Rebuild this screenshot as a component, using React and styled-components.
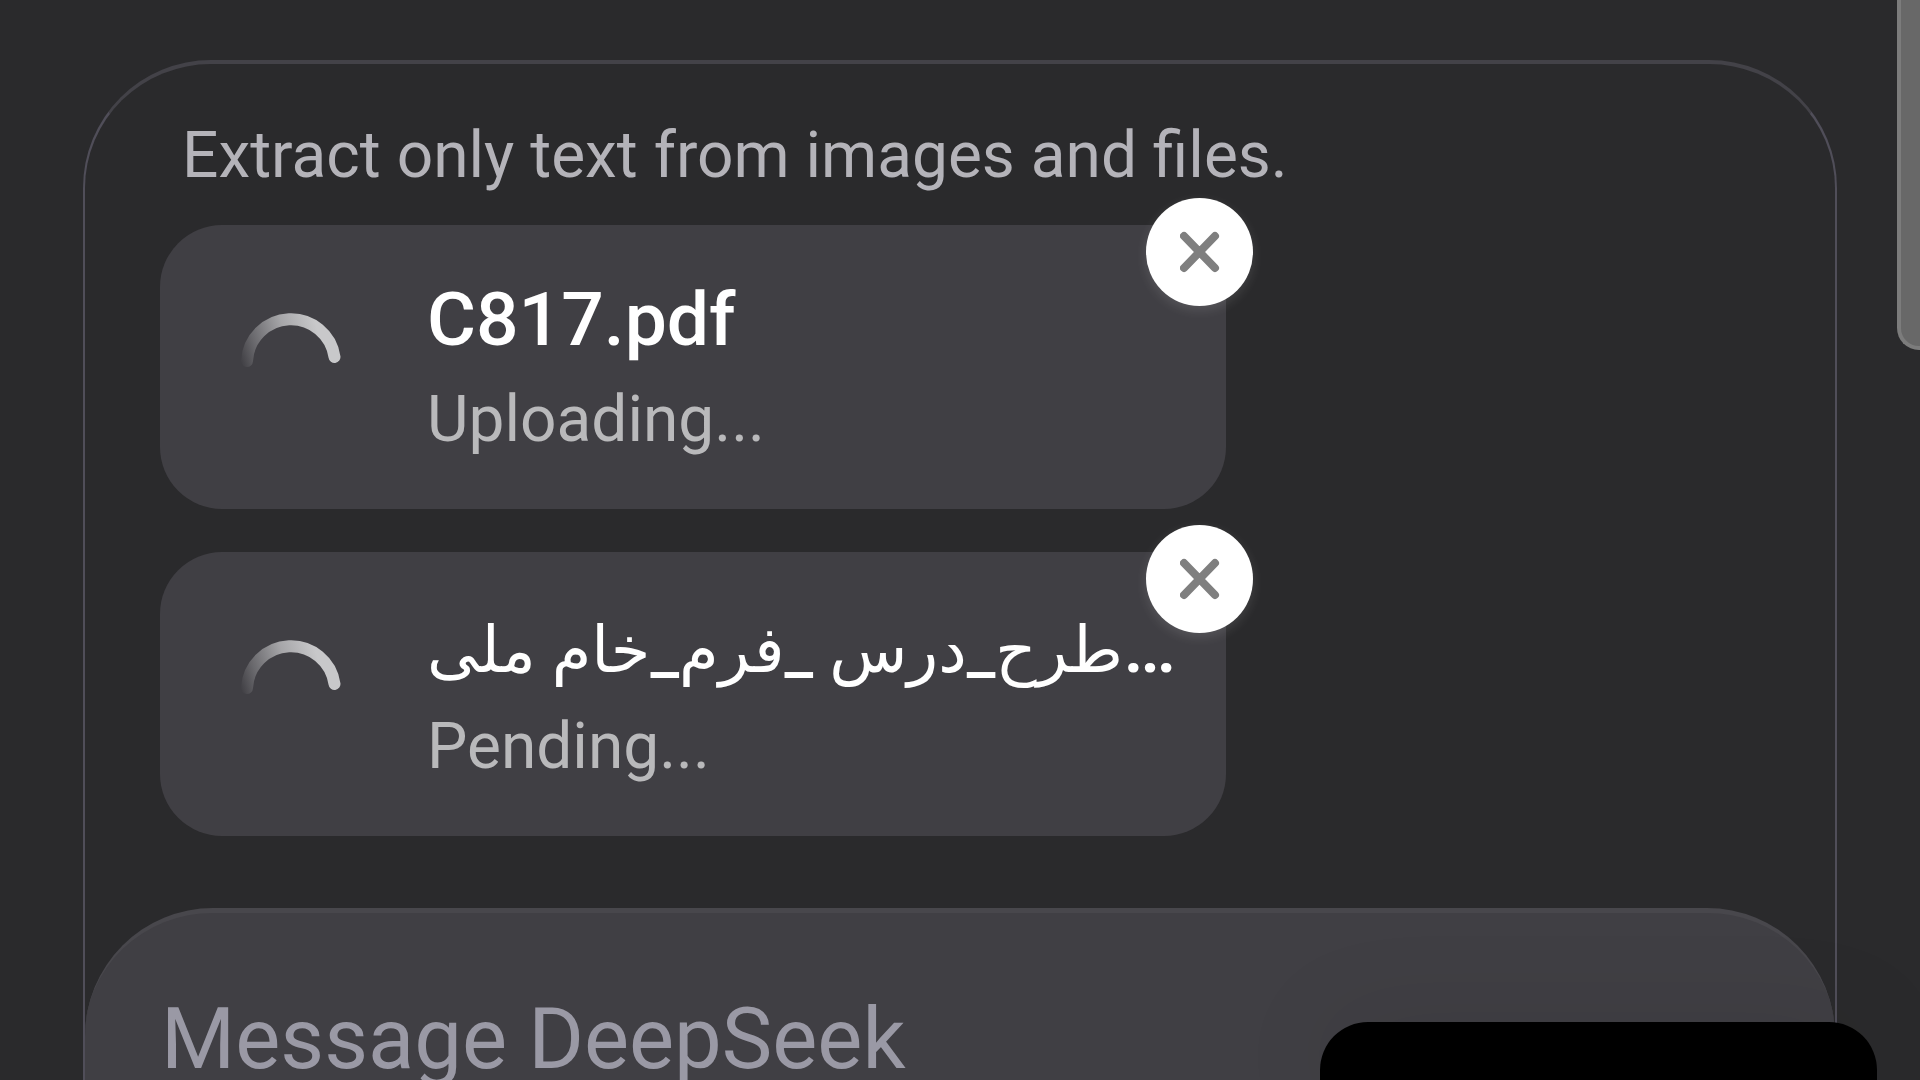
import React, { useState } from "react";
import styled, { createGlobalStyle } from "styled-components";

const initialFiles = [
  { id: 1, name: "C817.pdf", status: "Uploading..." },
  { id: 2, rtlName: "طرح_درس _فرم_خام ملی", status: "Pending..." },
];

const Spinner = ({ id }) => (
  <SpinnerSvg viewBox="0 0 100 100" role="img" aria-label="Loading">
    <defs>
      <linearGradient
        id={`fade-${id}`}
        gradientUnits="userSpaceOnUse"
        x1="0"
        y1="52"
        x2="88"
        y2="24"
      >
        <stop offset="0" stopColor="#c8c8ca" stopOpacity="0" />
        <stop offset="0.2" stopColor="#c8c8ca" stopOpacity="0.3" />
        <stop offset="0.55" stopColor="#c8c8ca" stopOpacity="0.75" />
        <stop offset="0.9" stopColor="#c8c8ca" />
      </linearGradient>
    </defs>
    <path
      d="M6 50A44 44 0 0 1 93.5 46"
      fill="none"
      stroke={`url(#fade-${id})`}
      strokeWidth="12"
      strokeLinecap="round"
    />
  </SpinnerSvg>
);

const App = () => {
  const [files, setFiles] = useState(initialFiles);
  const [message, setMessage] = useState("");

  const removeFile = (id) => {
    setFiles(files.filter((file) => file.id !== id));
  };

  return (
    <>
      <GlobalStyle />
      <Page>
        <Panel>
          <Hint>Extract only text from images and files.</Hint>
          <FileList>
            {files.map((file) => (
              <FileCard key={file.id}>
                <Spinner id={file.id} />
                <FileInfo>
                  <FileName>
                    {file.name}
                    {file.rtlName && (
                      <>
                        <RtlText lang="fa">{file.rtlName}</RtlText>…
                      </>
                    )}
                  </FileName>
                  <FileStatus>{file.status}</FileStatus>
                </FileInfo>
                <RemoveButton
                  type="button"
                  aria-label="Remove file"
                  onClick={() => removeFile(file.id)}
                >
                  <svg viewBox="0 0 40 42" width="40" height="42">
                    <path
                      d="M4 5L35 37M35 5L4 37"
                      stroke="#7f7f7f"
                      strokeWidth="8"
                      strokeLinecap="round"
                    />
                  </svg>
                </RemoveButton>
              </FileCard>
            ))}
          </FileList>
          <Composer>
            <MessageInput
              type="text"
              aria-label="Message"
              placeholder="Message DeepSeek"
              value={message}
              onChange={(e) => setMessage(e.target.value)}
            />
          </Composer>
        </Panel>
        <ScrollThumb />
        <Popover />
      </Page>
    </>
  );
};

const GlobalStyle = createGlobalStyle`
  * {
    box-sizing: border-box;
  }
  body {
    margin: 0;
    background: #2a2a2c;
    font-family: Roboto, "DejaVu Sans", sans-serif;
  }
`;

const Page = styled.main`
  position: relative;
  height: 100vh;
  padding: 60px 83px 0;
  overflow: hidden;
`;

const Panel = styled.section`
  display: flex;
  flex-direction: column;
  border: 2px solid #504e59;
  border-top: 4px solid #434248;
  border-bottom: 0;
  border-radius: 128px 128px 0 0;
  padding-top: 54px;
`;

const Hint = styled.p`
  margin: 0 97px;
  font-size: 64px;
  line-height: 76px;
  color: #b4b3b9;
`;

const FileList = styled.ul`
  display: flex;
  flex-direction: column;
  gap: 43px;
  max-width: 1066px;
  margin: 31px 75px 0;
  padding: 0;
  list-style: none;
`;

const FileCard = styled.li`
  position: relative;
  display: flex;
  align-items: flex-start;
  gap: 86px;
  padding: 50px 40px 51px 81px;
  border-radius: 62px;
  background: #403f44;
`;

const SpinnerSvg = styled.svg`
  flex: none;
  width: 100px;
  height: 100px;
  margin-top: 36px;
`;

const FileInfo = styled.div`
  display: flex;
  flex-direction: column;
  gap: 19px;
  min-width: 0;
`;

const FileName = styled.span`
  font-size: 75px;
  line-height: 88px;
  font-weight: 500;
  color: #fff;
  white-space: nowrap;
`;

const RtlText = styled.bdi`
  font-size: 64px;
  line-height: 1;
`;

const FileStatus = styled.span`
  font-size: 64px;
  line-height: 76px;
  color: #b9b9bb;
`;

const RemoveButton = styled.button`
  position: absolute;
  top: -27px;
  right: -27px;
  display: flex;
  align-items: center;
  justify-content: center;
  width: 107px;
  height: 108px;
  padding: 0;
  border: 0;
  border-radius: 50%;
  background: #fff;
  box-shadow: 0 4px 12px rgba(255, 255, 255, 0.12);
  cursor: pointer;
`;

const Composer = styled.div`
  margin-top: 72px;
  padding: 74px 76px 40px;
  border-top: 5px solid #48474c;
  border-radius: 128px 128px 0 0;
  background: #403f44;
`;

const MessageInput = styled.input`
  display: block;
  width: 100%;
  height: 104px;
  padding: 0;
  border: 0;
  outline: 0;
  background: transparent;
  font-family: inherit;
  font-size: 85px;
  color: #fff;
  &::placeholder {
    color: #9a99a5;
    opacity: 1;
  }
`;

const ScrollThumb = styled.div`
  position: absolute;
  top: 0;
  right: 0;
  width: 23px;
  height: 350px;
  border: solid #7c7c7c;
  border-width: 0 0 4px 4px;
  border-bottom-left-radius: 22px;
  background: #686868;
`;

const Popover = styled.div`
  position: absolute;
  right: 43px;
  bottom: 0;
  width: 557px;
  height: 58px;
  border-radius: 48px 48px 0 0;
  background: #000;
  box-shadow: 0 0 100px rgba(0, 0, 0, 0.1);
`;

export default App;
